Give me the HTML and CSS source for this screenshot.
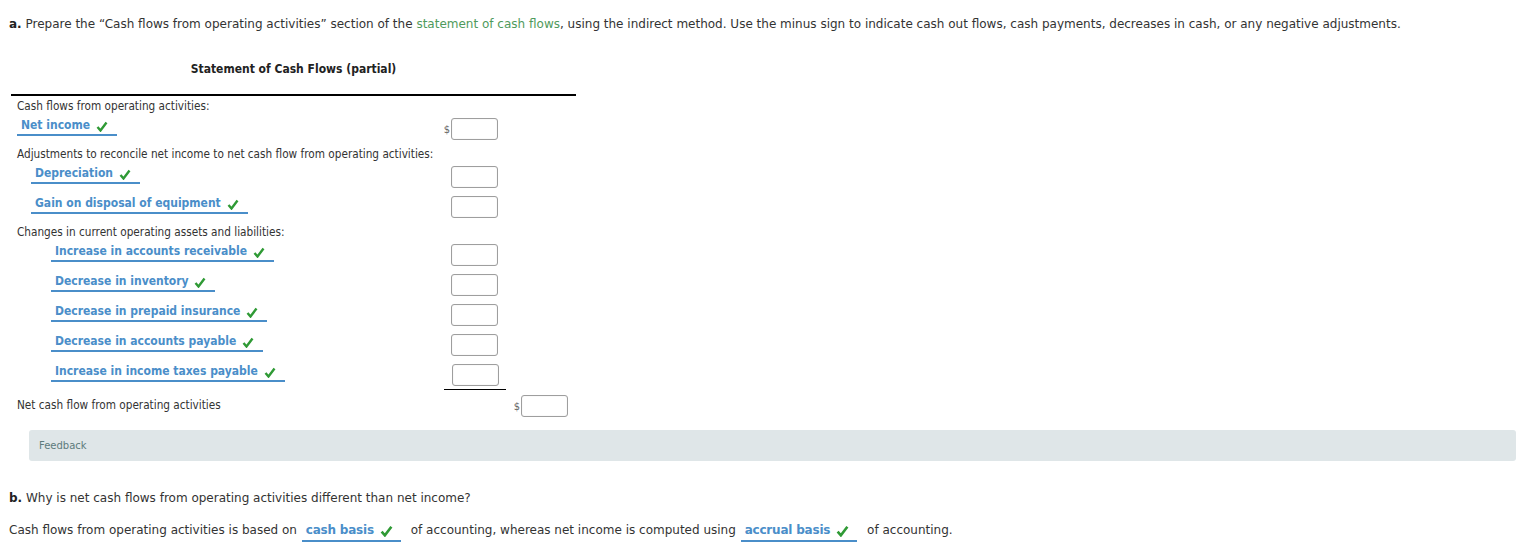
FILE: index.html
```html
<html>
    <head>
        <title>Statement of Cash Flows</title>
        <link rel="stylesheet" href="styles.css">
    </head>
    <body>
        <p class="question">
            <strong>a.</strong> Prepare the “Cash flows from operating activities” section of the <span class="term">statement of cash flows</span>, using the indirect method. Use the minus sign to indicate cash out flows, cash payments, decreases in cash, or any negative adjustments.
        </p>

        <div class="statement">
            <div class="title">Statement of Cash Flows (partial)</div>

            <div class="row head first"><span class="label">Cash flows from operating activities:</span></div>
            <div class="row">
                <span class="pick lvl1">Net income <svg class="tick" viewBox="0 0 12 11"><polyline points="1.5,6 4.5,9.5 10.5,1.5"/></svg></span>
                <span class="amt"><span class="cur">$</span><span class="box"></span></span>
            </div>

            <div class="row head"><span class="label">Adjustments to reconcile net income to net cash flow from operating activities:</span></div>
            <div class="row">
                <span class="pick lvl2">Depreciation <svg class="tick" viewBox="0 0 12 11"><polyline points="1.5,6 4.5,9.5 10.5,1.5"/></svg></span>
                <span class="amt"><span class="box"></span></span>
            </div>
            <div class="row">
                <span class="pick lvl2">Gain on disposal of equipment <svg class="tick" viewBox="0 0 12 11"><polyline points="1.5,6 4.5,9.5 10.5,1.5"/></svg></span>
                <span class="amt"><span class="box"></span></span>
            </div>

            <div class="row head"><span class="label">Changes in current operating assets and liabilities:</span></div>
            <div class="row">
                <span class="pick lvl3">Increase in accounts receivable <svg class="tick" viewBox="0 0 12 11"><polyline points="1.5,6 4.5,9.5 10.5,1.5"/></svg></span>
                <span class="amt"><span class="box"></span></span>
            </div>
            <div class="row">
                <span class="pick lvl3">Decrease in inventory <svg class="tick" viewBox="0 0 12 11"><polyline points="1.5,6 4.5,9.5 10.5,1.5"/></svg></span>
                <span class="amt"><span class="box"></span></span>
            </div>
            <div class="row">
                <span class="pick lvl3">Decrease in prepaid insurance <svg class="tick" viewBox="0 0 12 11"><polyline points="1.5,6 4.5,9.5 10.5,1.5"/></svg></span>
                <span class="amt"><span class="box"></span></span>
            </div>
            <div class="row">
                <span class="pick lvl3">Decrease in accounts payable <svg class="tick" viewBox="0 0 12 11"><polyline points="1.5,6 4.5,9.5 10.5,1.5"/></svg></span>
                <span class="amt"><span class="box"></span></span>
            </div>
            <div class="row last">
                <span class="pick lvl3">Increase in income taxes payable <svg class="tick" viewBox="0 0 12 11"><polyline points="1.5,6 4.5,9.5 10.5,1.5"/></svg></span>
                <span class="amt ruled"><span class="box"></span></span>
            </div>

            <div class="row total">
                <span class="label">Net cash flow from operating activities</span>
                <span class="amt"></span>
                <span class="amt"><span class="cur">$</span><span class="box"></span></span>
            </div>
        </div>

        <div class="feedback">Feedback</div>

        <p class="question part-b"><strong>b.</strong> Why is net cash flows from operating activities different than net income?</p>
        <p class="answer">
            Cash flows from operating activities is based on <span class="choice">cash basis <svg class="tick big" viewBox="0 0 12 11"><polyline points="1.5,6 4.5,9.5 10.5,1.5"/></svg></span> of accounting, whereas net income is computed using <span class="choice">accrual basis <svg class="tick big" viewBox="0 0 12 11"><polyline points="1.5,6 4.5,9.5 10.5,1.5"/></svg></span> of accounting.
        </p>
    </body>
</html>
```

FILE: styles.css
```css
body
{
    margin: 0;
    padding: 0 9px;

    font-family: "DejaVu Sans", Verdana, sans-serif;
    font-size: 12px;
    color: #333333;
}

.question
{
    margin: 15px 0 0 0;
    line-height: 18px;
}

.question strong
{
    color: #222222;
}

.term
{
    color: #4f9a5c;
}

/* statement */

.statement
{
    width: 565px;
    margin-left: 2px;

    font-family: "DejaVu Sans Condensed", Tahoma, sans-serif;
}

.title
{
    margin-top: 27px;
    padding-bottom: 16px;
    border-bottom: 2px solid #000000;

    line-height: 18px;
    text-align: center;
    font-weight: bold;
    color: #222222;
}

.row
{
    display: grid;
    grid-template-columns: 430px 65px 70px;
    align-items: start;
    height: 30px;
}

.row.head
{
    height: 18px;
    line-height: 18px;
}

.row.first
{
    padding-top: 1px;
}

.label
{
    padding-left: 6px;
    font-size: 11.7px;
    color: #333333;
    white-space: nowrap;
}

.pick
{
    justify-self: start;
    margin-top: 2px;
    padding: 0 9px 1px 4px;
    border-bottom: 2px solid #4a8ec9;

    line-height: 16px;
    font-weight: bold;
    color: #4a8ec9;
    white-space: nowrap;
}

.lvl1 { margin-left: 6px; }
.lvl2 { margin-left: 20px; }
.lvl3 { margin-left: 40px; }

.tick
{
    width: 12px;
    height: 11px;
    margin-left: 2px;
    vertical-align: -3px;
}

.tick polyline
{
    fill: none;
    stroke: #2f9a35;
    stroke-width: 2.4;
}

.amt
{
    display: flex;
    justify-content: flex-end;
    align-items: center;
    margin-top: 3px;
    padding-right: 8px;
}

.amt.ruled
{
    margin-left: 3px;
    padding-right: 7px;
    padding-bottom: 3px;
    border-bottom: 1px solid #000000;
}

.cur
{
    margin-right: 1px;
    font-size: 11px;
    color: #666666;
}

.box
{
    display: block;
    width: 45px;
    height: 20px;
    border: 1px solid #9e9e9e;
    border-radius: 3px;
    box-shadow: inset 0 0 1px #cccccc;
    background: #ffffff;
}

.row.total
{
    height: 28px;
}

.row.total .label
{
    margin-top: 5px;
    line-height: 18px;
}

.row.total .amt
{
    margin-top: 4px;
}

/* feedback bar */

.feedback
{
    margin: 11px -9px 0 20px;
    padding-left: 10px;
    height: 31px;
    border-radius: 3px;
    background-color: #dfe6e8;

    line-height: 31px;
    font-size: 10px;
    color: #5d7b7c;
}

/* part b */

.part-b
{
    margin-top: 28px;
}

.answer
{
    margin: 14px 0 0 0;
    line-height: 18px;
}

.choice
{
    display: inline-block;
    margin: 0 6px 0 1px;
    padding: 0 8px 2px 4px;
    border-bottom: 2px solid #4a8ec9;

    line-height: 16px;
    font-weight: bold;
    letter-spacing: -0.2px;
    color: #4a8ec9;
}

.tick.big
{
    width: 13px;
    height: 12px;
    stroke-width: 2.8;
}
```
